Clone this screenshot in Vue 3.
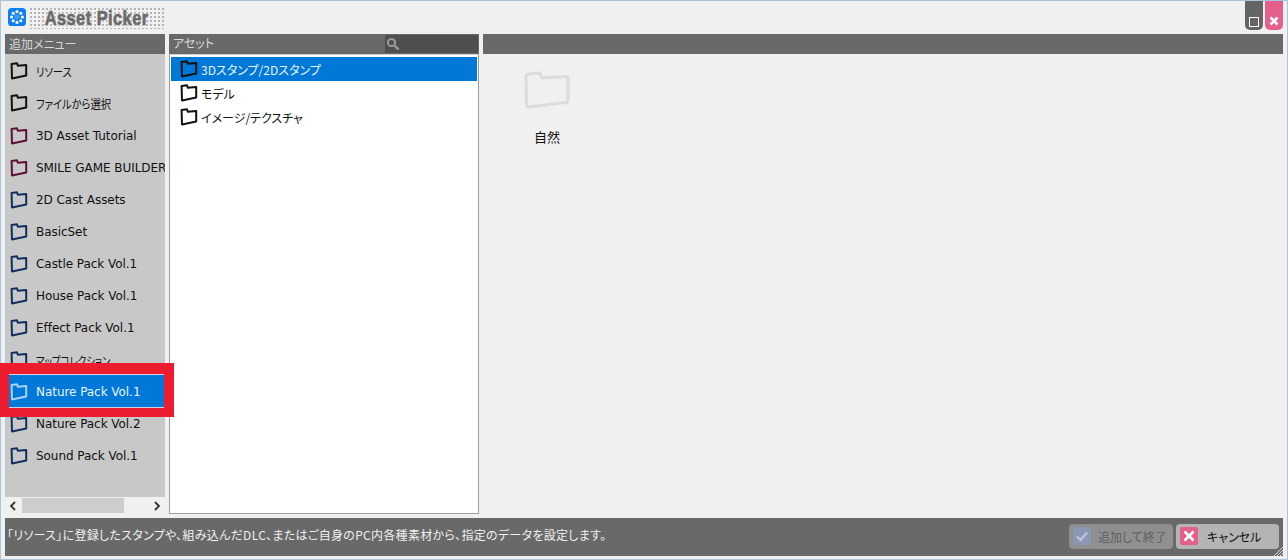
<script setup>
const items = [
  { label: 'リソース', color: '#111', sx: 0.86 },
  { label: 'ファイルから選択', color: '#111', sx: 0.86 },
  { label: '3D Asset Tutorial', color: '#5c1233' },
  { label: 'SMILE GAME BUILDER', color: '#5c1233' },
  { label: '2D Cast Assets', color: '#12305c' },
  { label: 'BasicSet', color: '#12305c' },
  { label: 'Castle Pack Vol.1', color: '#12305c' },
  { label: 'House Pack Vol.1', color: '#12305c' },
  { label: 'Effect Pack Vol.1', color: '#12305c' },
  { label: 'マップコレクション', color: '#12305c', sx: 0.79 },
  { label: 'Nature Pack Vol.1', color: '#a9d3f3', selected: true },
  { label: 'Nature Pack Vol.2', color: '#12305c' },
  { label: 'Sound Pack Vol.1', color: '#12305c' }
]
const assets = [
  { label: '3Dスタンプ/2Dスタンプ', selected: true },
  { label: 'モデル' },
  { label: 'イメージ/テクスチャ' }
]
const folder = 'M1.6 2 L7 1.2 L7.8 3.8 L16.2 3 L16.2 13.4 L2 16.4 Z'
const dots = Array.from({ length: 8 }, (_, i) => {
  const a = (i * Math.PI) / 4
  return { x: 10 + 6 * Math.cos(a), y: 10 + 6 * Math.sin(a) }
})
const labelStyle = (it) => (it.sx ? { transform: `scaleX(${it.sx})` } : null)
</script>

<template>
  <div class="window">
    <header class="titlebar">
      <svg class="app-icon" width="18" height="18" viewBox="0 0 20 20">
        <rect width="20" height="20" rx="4" fill="#0d7ff0" />
        <circle v-for="(d, i) in dots" :key="i" :cx="d.x" :cy="d.y" r="1.7" fill="#fff" />
        <circle cx="10" cy="10" r="3" fill="#3f9df5" />
      </svg>
      <div class="logo"><span>Asset Picker</span></div>
      <div class="win-buttons">
        <button class="win-btn max"><span class="square"></span></button>
        <button class="win-btn close">
          <svg width="10" height="10" viewBox="0 0 10 10"><path d="M1.5 1.5 L8.5 8.5 M8.5 1.5 L1.5 8.5" stroke="#fff" stroke-width="2.6" /></svg>
        </button>
      </div>
    </header>

    <main class="columns">
      <section class="menu">
        <div class="head">追加メニュー</div>
        <ul class="menu-list">
          <li v-for="it in items" :key="it.label" class="menu-item" :class="{ selected: it.selected }">
            <svg class="folder" width="18" height="18" viewBox="0 0 18 18">
              <path :d="folder" fill="none" :stroke="it.color" stroke-width="2" stroke-linejoin="round" />
            </svg>
            <span class="menu-label" :style="labelStyle(it)">{{ it.label }}</span>
          </li>
        </ul>
        <div class="hscroll">
          <svg width="8" height="10" viewBox="0 0 8 10"><path d="M6 1 L2 5 L6 9" fill="none" stroke="#333" stroke-width="1.8" /></svg>
          <div class="thumb"></div>
          <svg class="arrow-right" width="8" height="10" viewBox="0 0 8 10"><path d="M2 1 L6 5 L2 9" fill="none" stroke="#333" stroke-width="1.8" /></svg>
        </div>
      </section>

      <section class="assets">
        <div class="head assets-head">
          <span>アセット</span>
          <div class="search">
            <svg width="14" height="14" viewBox="0 0 14 14">
              <circle cx="5.5" cy="5.5" r="3.6" fill="none" stroke="#9a9a9a" stroke-width="2" />
              <path d="M8.5 8.5 L12.5 12.5" stroke="#9a9a9a" stroke-width="2.4" />
            </svg>
          </div>
        </div>
        <ul class="asset-list">
          <li v-for="a in assets" :key="a.label" class="asset-item" :class="{ selected: a.selected }">
            <svg class="folder" width="18" height="18" viewBox="0 0 18 18">
              <path :d="folder" fill="none" stroke="#111" stroke-width="2" stroke-linejoin="round" />
            </svg>
            <span>{{ a.label }}</span>
          </li>
        </ul>
      </section>

      <section class="preview">
        <div class="head"></div>
        <div class="grid">
          <div class="tile">
            <svg width="46" height="40" viewBox="0 0 46 40">
              <path d="M2 6 Q2 3 5 3 L16 2 L18 7 L42 5.5 Q44 5.5 44 8 L44 29 Q44 31 42 31.5 L5 36 Q2.5 36 2.5 33 Z" fill="none" stroke="#dcdcdc" stroke-width="3" stroke-linejoin="round" />
            </svg>
            <span class="tile-label">自然</span>
          </div>
        </div>
      </section>
    </main>

    <footer class="status">
      <span class="status-text">「リソース」に登録したスタンプや、組み込んだDLC、またはご自身のPC内各種素材から、指定のデータを設定します。</span>
      <div class="actions">
        <button class="action disabled">
          <span class="badge ok">
            <svg width="14" height="14" viewBox="0 0 14 14"><path d="M2 7.5 L5.5 11 L12 3.5" fill="none" stroke="#bcc4d4" stroke-width="2.4" /></svg>
          </span>
          <span>追加して終了</span>
        </button>
        <button class="action">
          <span class="badge cancel">
            <svg width="14" height="14" viewBox="0 0 14 14"><path d="M2.5 2.5 L11.5 11.5 M11.5 2.5 L2.5 11.5" stroke="#fff" stroke-width="2.6" /></svg>
          </span>
          <span>キャンセル</span>
        </button>
      </div>
      <svg class="grip" width="10" height="10" viewBox="0 0 10 10"><path d="M10 1 L1 10 M10 4 L4 10 M10 7 L7 10" stroke="#d8d8d8" stroke-width="1" /></svg>
    </footer>
  </div>
</template>

<style>
html, body { margin: 0; background: #f0f0f0; overflow: hidden; }
</style>

<style scoped>
* { box-sizing: border-box; }
.window {
  width: 1288px;
  height: 560px;
  display: flex;
  flex-direction: column;
  padding: 0 4px 3px 4px;
  background: #f0f0f0;
  border: 1px solid #a9c4de;
  font-family: "DejaVu Sans", "Noto Sans CJK JP", sans-serif;
  font-feature-settings: "palt";
  font-size: 12px;
  color: #111;
  position: relative;
}
.titlebar {
  height: 33px;
  display: flex;
  align-items: flex-start;
  flex: none;
}
.app-icon { margin: 7px 0 0 3px; flex: none; }
.logo {
  width: 136px;
  height: 22px;
  margin: 6px 0 0 3px;
  background-image: radial-gradient(circle, #b4b4b4 1.1px, transparent 1.3px);
  background-size: 4px 4px;
  display: flex;
  align-items: center;
  justify-content: center;
}
.logo span {
  font-family: "Liberation Sans", sans-serif;
  font-weight: 700;
  font-size: 21px;
  letter-spacing: 0.6px;
  color: #6a6a6a;
  white-space: nowrap;
  transform: scaleX(0.78);
  text-shadow: 0 0 2px #f0f0f0, 0 0 2px #f0f0f0, 0 0 3px #f0f0f0;
  -webkit-text-stroke: 0.7px #6a6a6a;
}
.win-buttons { margin-left: auto; display: flex; gap: 2px; }
.win-btn {
  width: 18px;
  height: 29px;
  border: 0;
  padding: 0 0 3px;
  border-radius: 0 0 5px 5px;
  display: flex;
  align-items: flex-end;
  justify-content: center;
}
.win-btn.max { background: #646464; }
.win-btn.close { background: #e4608a; padding-bottom: 4px; }
.square { width: 10px; height: 10px; border: 1px solid #fff; display: block; }

.columns { flex: 1; display: flex; gap: 4px; min-height: 0; }
.head {
  height: 20px;
  flex: none;
  background: #696969;
  color: #d8d8d8;
  line-height: 22px;
  padding-left: 4px;
  font-size: 12px;
}
.menu { width: 160px; flex: none; display: flex; flex-direction: column; }
.menu-list {
  list-style: none;
  margin: 0;
  padding: 2px 0 0;
  flex: 1;
  background: #c8c8c8;
}
.menu-item {
  height: 32px;
  display: flex;
  align-items: center;
  padding-left: 5px;
  white-space: nowrap;
  position: relative;
}
.menu-item:nth-child(-n + 2) { top: -1px; }
.folder { flex: none; }
.menu-label {
  margin-left: 8px;
  letter-spacing: -0.05px;
  overflow: hidden;
  flex: 1;
  min-width: 0;
  transform-origin: left center;
}
.menu-item.selected {
  color: #e8f4ff;
  background: #0078d7;
  z-index: 1;
  box-shadow: 0 -1px 0 #0078d7, 0 -2px 0 #c9d6e4, inset 0 -1px 0 #c9d6e4;
}
.menu-item.selected::after {
  content: "";
  position: absolute;
  left: -5px;
  right: -9px;
  top: -13px;
  bottom: -9px;
  border: solid #ed1c2e;
  border-width: 11px 10px 9px 9px;
  pointer-events: none;
}
.hscroll {
  height: 17px;
  flex: none;
  display: flex;
  align-items: center;
  padding: 0 4px;
}
.thumb { width: 102px; height: 15px; background: #cdcdcd; margin-left: 5px; }
.arrow-right { margin-left: auto; }

.assets { width: 310px; flex: none; display: flex; flex-direction: column; height: 480px; }
.assets-head { display: flex; justify-content: space-between; align-items: center; padding-right: 1px; }
.search {
  width: 93px;
  height: 18px;
  background: #4f4f4f;
  display: flex;
  align-items: center;
  padding-left: 1px;
}
.asset-list {
  list-style: none;
  margin: 0;
  padding: 2px 1px 0;
  flex: 1;
  background: #fff;
  border: 1px solid #9e9e9e;
  border-top: 1px solid #d0d0d0;
}
.asset-item {
  height: 24px;
  display: flex;
  align-items: center;
  padding-left: 9px;
  gap: 3px;
  font-family: "Noto Sans CJK JP", sans-serif;
  font-size: 12px;
}
.asset-item.selected { background: #0078d7; color: #e8f4ff; }

.preview { flex: 1; display: flex; flex-direction: column; }
.grid { padding: 17px 0 0 17px; }
.tile { width: 94px; display: flex; flex-direction: column; align-items: center; }
.tile-label { margin-top: 18px; font-family: "Noto Sans CJK JP", sans-serif; font-size: 13px; line-height: 16px; }

.status {
  height: 38px;
  flex: none;
  margin-top: 4px;
  background: #696969;
  display: flex;
  align-items: center;
  padding: 0 4px 0 2px;
  position: relative;
}
.status-text {
  color: #f0f0f0;
  font-family: "Noto Sans CJK JP", sans-serif;
  font-size: 12px;
  letter-spacing: 0.3px;
  white-space: nowrap;
  position: relative;
  top: -3px;
}
.actions { margin-left: auto; display: flex; gap: 3px; margin-top: -2px; }
.action {
  height: 25px;
  border: 0;
  padding: 0 4px;
  border-radius: 4px;
  background: #b4b4b4;
  display: flex;
  align-items: center;
  gap: 9px;
  font-family: "Noto Sans CJK JP", sans-serif;
  font-feature-settings: "palt";
  font-size: 12px;
  color: #111;
  width: 103px;
  white-space: nowrap;
}
.action.disabled { background: #8f8f8f; color: #606060; width: 104px; gap: 7px; }
.badge { width: 18px; height: 18px; border-radius: 2px; display: flex; align-items: center; justify-content: center; flex: none; }
.badge.ok { background: #8a98b4; }
.badge.cancel { background: #e4608a; }
.grip { position: absolute; right: 0; bottom: 0; }
</style>
